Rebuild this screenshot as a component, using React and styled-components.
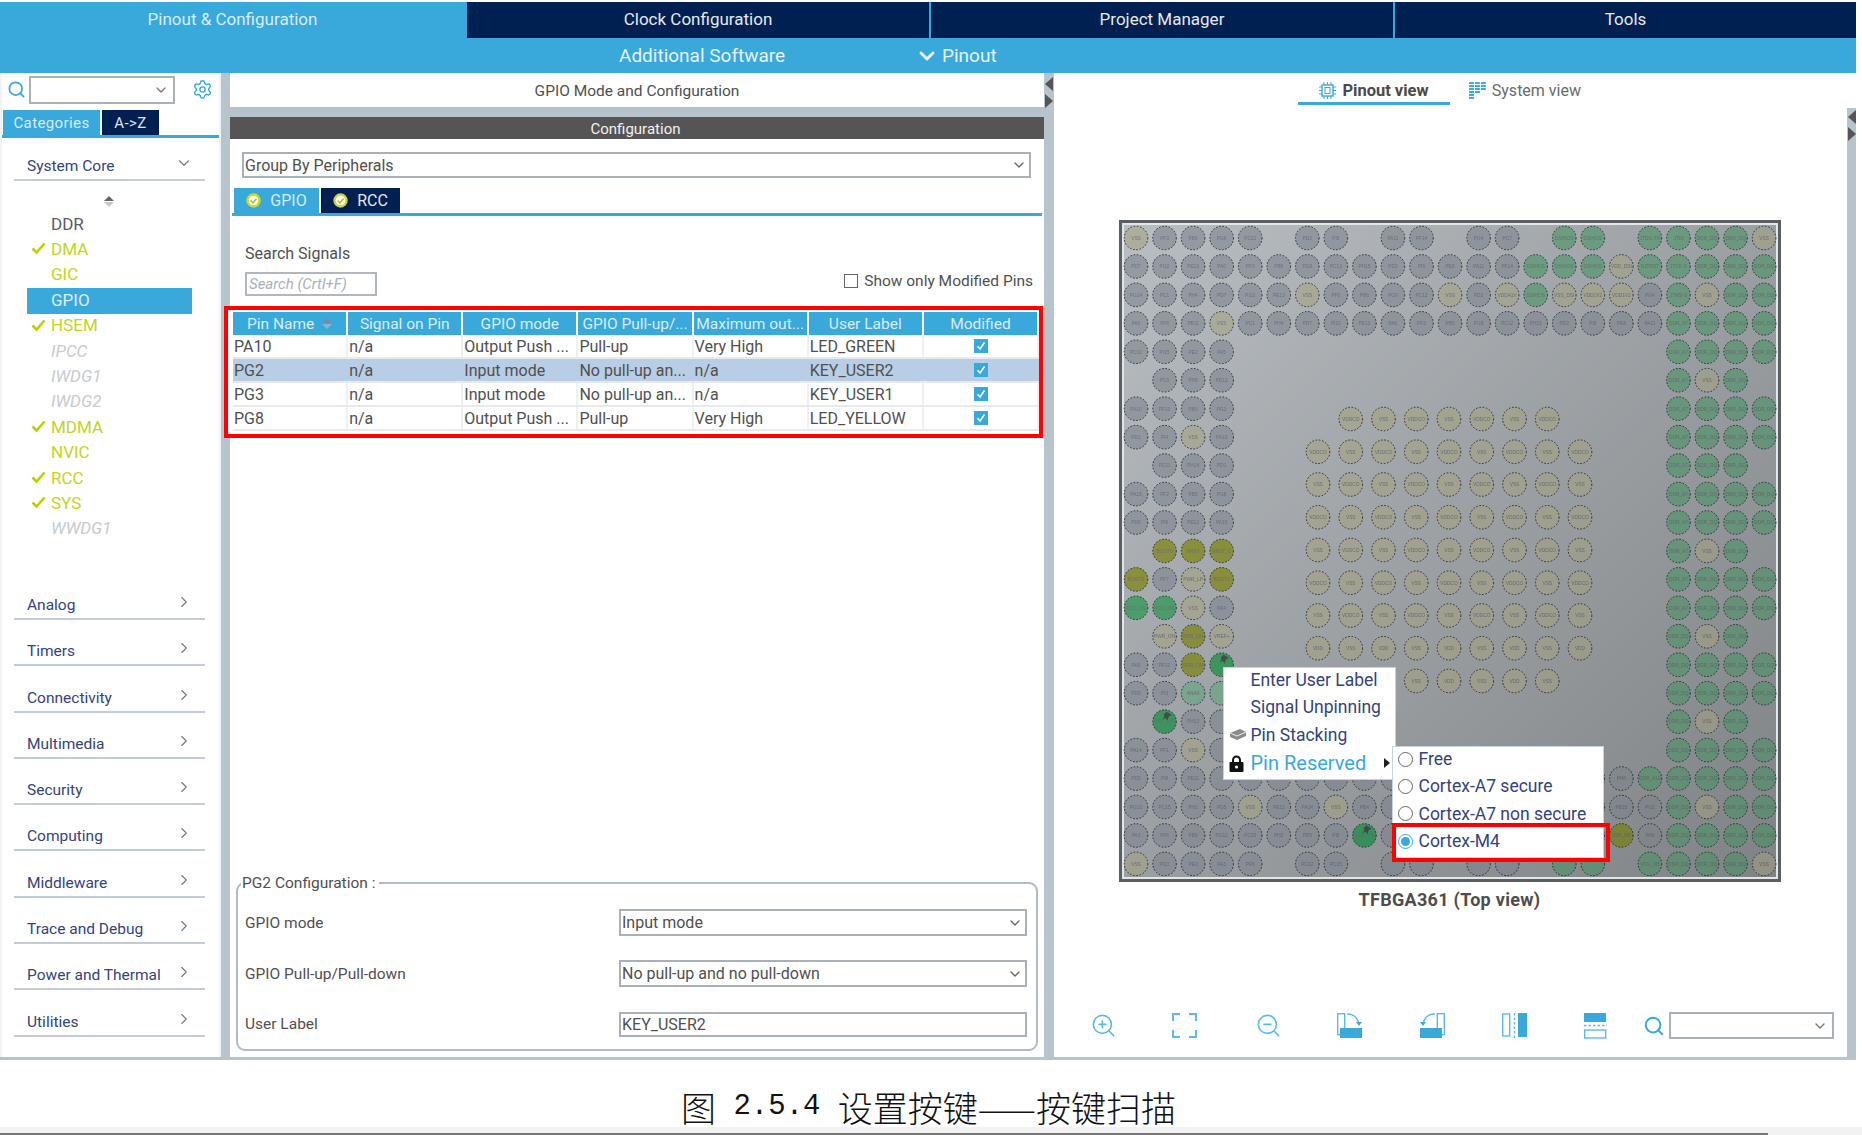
import React from 'react';
import styled, { createGlobalStyle } from 'styled-components';
import { Search, Settings, ChevronDown, ChevronRight, ZoomIn, ZoomOut } from 'lucide-react';

const BLUE = '#39a9dc';
const NAVY = '#002052';
const STRIP = '#b8c4cc';
const INK = '#34437a';
const TEXT = '#505050';

const Global = createGlobalStyle`
  html, body { margin: 0; padding: 0; background: #fff; overflow: hidden; }
  * { box-sizing: border-box; }
  body { font-family: Roboto, "Liberation Sans", Arial, sans-serif; }
`;

const Page = styled.div`
  width: 1862px; height: 1135px; display: flex; flex-direction: column; background: #fff; overflow: hidden;
`;
const Header = styled.header`
  margin-top: 2px; width: 1856px; height: 71px; background: ${BLUE}; display: flex; flex-direction: column; flex: none;
`;
const TabRow = styled.div`
  display: grid; grid-template-columns: 465px 462px 462px 1fr; column-gap: 2px; height: 36px;
`;
const TopTab = styled.div`
  display: flex; align-items: center; justify-content: center; font-size: 17px; padding-bottom: 2px;
  color: ${p => (p.$active ? '#d5ecf7' : '#e6e9ee')};
  background: ${p => (p.$active ? BLUE : NAVY)};
`;
const SubRow = styled.div`
  flex: 1; display: flex; align-items: center; color: #e4f3fa; font-size: 19px; padding: 0 0 0 619px;
`;
const SubLabel = styled.span` width: 296px; white-space: nowrap; `;
const SubPinout = styled.span` display: flex; align-items: center; gap: 3px; `;

const Main = styled.main`
  width: 1856px; height: 987px; flex: none; background: ${STRIP}; display: flex; padding-bottom: 3px;
`;

/* left */
const Left = styled.aside`
  width: 221px; flex: none; background: #fff; display: flex; flex-direction: column;
  border-left: 2px solid #f0f2f3; border-right: 2px solid #f0f2f3;
`;
const LeftTop = styled.div`
  display: flex; align-items: center; gap: 3px; height: 37px; padding: 0 0 4px 5px; color: ${BLUE}; flex: none;
`;
const Combo = styled.div`
  height: ${p => p.$h || 28}px; width: ${p => p.$w}px; border: 2px solid #aab1b7; background: #fff;
  display: flex; align-items: center; justify-content: flex-end; padding-right: 4px; color: #777; flex: none;
`;
const GearWrap = styled.span` margin-left: 14px; display: flex; `;
const CatTabs = styled.div`
  display: flex; gap: 2px; padding-left: 1px; height: 28px; border-bottom: 3px solid ${BLUE}; flex: none;
`;
const CatTab = styled.div`
  width: ${p => p.$w}px; height: 25px; font-size: 15px; letter-spacing: .4px;
  display: flex; align-items: center; justify-content: center;
  background: ${p => (p.$active ? BLUE : NAVY)}; color: ${p => (p.$active ? '#d5ecf7' : '#dfe4ec')};
`;
const Section = styled.div`
  margin: ${p => p.$mt || 0}px 14px 0 12px; height: ${p => p.$h || 46.3}px; display: flex; align-items: flex-end;
  justify-content: space-between; border-bottom: 2px solid #c3ccd4; color: ${INK}; font-size: 15.5px;
  padding: 0 12px 4px 13px; flex: none;
`;
const SectionIcon = styled.span` display: flex; color: #777; position: relative; top: -3px; `;
const Sorter = styled.div`
  height: 31px; display: flex; flex-direction: column; align-items: center; justify-content: center; padding: 10px 4px 0 0; gap: 1px; flex: none;
`;
const TriUp = styled.i` width: 0; height: 0; border: 5px solid transparent; border-top: 0; border-bottom: 5px solid ${p => p.$c}; `;
const TriDown = styled.i` width: 0; height: 0; border: 5px solid transparent; border-bottom: 0; border-top: 5px solid ${p => p.$c}; `;
const ItemList = styled.div` height: 315px; display: flex; flex-direction: column; flex: none; `;
const Item = styled.div`
  height: 25.4px; margin: 0 27px 0 25px; flex: none; position: relative; display: flex; align-items: center; padding: 0 0 2px 24px;
  font-size: 17px; font-style: ${p => (p.$off ? 'italic' : 'normal')};
  color: ${p => (p.$sel ? '#d9eef8' : p.$off ? '#c6cbd1' : p.$plain ? '#5a5a66' : '#c3d422')};
  background: ${p => (p.$sel ? BLUE : 'transparent')};
`;
const ItemCheck = styled.svg` position: absolute; left: 4px; top: 5px; `;

/* middle */
const StripCol = styled.div`
  width: ${p => p.$w}px; flex: none; display: flex; flex-direction: column; align-items: center; gap: 3px;
  padding-top: ${p => p.$pt || 0}px;
`;
const RightStrip = styled(StripCol)`
  margin-top: 35px; background: ${STRIP};
`;
const TriLeft = styled.i` width: 0; height: 0; border: 7px solid transparent; border-left: 0; border-right: 8px solid #555; `;
const TriRight = styled.i` width: 0; height: 0; border: 7px solid transparent; border-right: 0; border-left: 8px solid #555; `;
const Mid = styled.section`
  width: 814px; flex: none; background: #fff; display: flex; flex-direction: column;
`;
const MidTitle = styled.div`
  display: flex; align-items: center; justify-content: center; color: ${TEXT}; font-size: 15.5px;
  border-bottom: 10px solid ${STRIP}; flex: none; height: 44px; padding-top: 1px;
`;
const ConfBar = styled.div`
  height: 22px; background: #555; color: #f1f1f1; font-size: 15px; display: flex; align-items: center; justify-content: center; flex: none; padding: 1px 3px 0 0;
`;
const Select = styled.div`
  height: ${p => p.$h}px; margin: ${p => p.$m || 0}; width: ${p => p.$w}px; flex: none; border: 2px solid #a9b0b6; display: flex; align-items: center;
  justify-content: space-between; color: ${TEXT}; font-size: 16px; padding: 0 2px 0 1px; white-space: nowrap;
`;
const SubTabs = styled.div`
  display: flex; gap: 2px; margin: 10px 2px 0 2px; padding-left: 2px; height: 28px; border-bottom: 3px solid ${BLUE}; flex: none;
`;
const SubTab = styled.div`
  width: ${p => p.$w}px; height: 25px; display: flex; align-items: center; justify-content: center; gap: 9px; font-size: 16px;
  background: ${p => (p.$active ? BLUE : NAVY)}; color: ${p => (p.$active ? '#d5ecf7' : '#e6e9ee')};
`;
const SearchLabel = styled.div` margin: 29px 0 0 15px; color: ${TEXT}; font-size: 16px; height: 18px; line-height: 18px; flex: none; `;
const SearchRow = styled.div`
  display: flex; justify-content: space-between; align-items: flex-start; margin: 9px 11px 0 15px; height: 24px; flex: none;
`;
const SearchBox = styled.div`
  width: 132px; height: 24px; border: 2px solid #b1b7bd; color: #aab0b6; font-style: italic; font-size: 15px;
  padding-left: 2px; display: flex; align-items: center; white-space: nowrap;
`;
const ShowOnly = styled.label` display: flex; align-items: center; gap: 6px; color: ${TEXT}; font-size: 15.5px; height: 15px; margin-top: 1px; white-space: nowrap; `;
const EmptyBox = styled.span` width: 14px; height: 14px; border: 1.5px solid #666; display: block; `;
const TableFrame = styled.div`
  margin: 10px 1px 0 -6px; border: 4px solid #f00; height: 132px; padding: 2px 0 0 5px; flex: none; background: #fff;
`;
const Cols = styled.div`
  display: grid; grid-template-columns: repeat(7, 1fr); height: ${p => p.$h}px;
  background: ${p => (p.$sel ? '#b9cde4' : 'transparent')};
  border-bottom: ${p => (p.$head ? '0' : '2px solid #e6eaee')};
`;
const Th = styled.div`
  background: ${BLUE}; color: #d8eef8; font-size: 15.5px; display: flex; align-items: center; justify-content: center;
  gap: 8px; margin-right: 2px; white-space: nowrap; overflow: hidden;
`;
const Td = styled.div`
  color: ${TEXT}; font-size: 16px; display: flex; align-items: center; padding-left: 1px; white-space: nowrap; overflow: hidden;
  justify-content: ${p => (p.$center ? 'center' : 'flex-start')};
  border-right: 2px solid ${p => (p.$sel ? 'transparent' : '#eef1f3')};
`;
const SortIcon = styled.span` display: flex; flex-direction: column; gap: 1px; `;
const Fieldset = styled.fieldset`
  margin: auto 6px 6px 6px; padding: 0 9px 0 7px; height: 176px; border: 2px solid #b3bbc2; border-radius: 9px; flex: none;
  display: flex; flex-direction: column;
`;
const Legend = styled.legend`
  color: ${TEXT}; font-size: 15.5px; padding: 0 4px 0 1px; margin-left: -4px; line-height: 16px;
`;
const FormRow = styled.div`
  display: flex; align-items: center; justify-content: space-between; height: ${p => p.$h}px; margin-top: ${p => p.$mt || 0}px;
  color: ${TEXT}; font-size: 15.5px; flex: none;
`;

/* right */
const Right = styled.section`
  flex: 1; background: #fff; display: flex; min-width: 0;
`;
const RightBody = styled.div`
  flex: 1; display: flex; flex-direction: column; align-items: center; min-width: 0; padding-right: 2px;
`;
const ViewTabs = styled.div` display: flex; height: 32px; gap: 19px; flex: none; align-self: flex-start; margin-left: 244px; `;
const ViewTab = styled.div`
  display: flex; align-items: center; justify-content: center; gap: 6px; width: ${p => p.$w}px; height: 32px; padding-top: 5px; font-size: ${p => (p.$on ? 16.5 : 16)}px;
  white-space: nowrap;
  color: ${p => (p.$on ? '#4a4a4a' : '#6a6a6a')}; font-weight: ${p => (p.$on ? 700 : 400)};
  border-bottom: 3px solid ${p => (p.$on ? BLUE : 'transparent')};
`;
const ChipWrap = styled.div` margin-top: 115px; width: 662px; height: 662px; position: relative; flex: none; `;
const ChipTitle = styled.div` margin-top: 9px; font-weight: 700; font-size: 18px; letter-spacing: .3px; color: #4d4d4d; height: 18px; line-height: 18px; flex: none; `;
const Toolbar = styled.div`
  margin-top: 103px; display: flex; align-items: center; align-self: flex-start; margin-left: 36px; color: ${BLUE}; height: 27px; flex: none;
`;
const ToolSlot = styled.span` width: ${p => p.$w || 82.4}px; flex: none; display: flex; `;
const ToolTail = styled.span` display: flex; align-items: center; gap: 4px; margin-left: -1px; `;

const Menu = styled.div`
  position: absolute; background: #fff; border: 1.5px solid #c7d3db; color: ${INK};
  left: ${p => p.$l}px; top: ${p => p.$t}px; width: ${p => p.$w}px; height: ${p => p.$h}px;
`;
const MenuLine = styled.div`
  height: 27.3px; display: flex; align-items: center; padding: 0 0 ${p => (p.$active ? 1 : 3)}px ${p => p.$pl}px; position: relative; white-space: nowrap;
  color: ${p => (p.$active ? BLUE : INK)}; font-size: ${p => (p.$active ? 20 : 17.5)}px;
  gap: 6px;
`;
const MenuIcon = styled.span` position: absolute; left: 5px; display: flex; `;
const MenuArrow = styled.i`
  position: absolute; right: 5px; top: 8px; width: 0; height: 0;
  border: 5px solid transparent; border-right: 0; border-left: 6px solid #222;
`;
const Radio = styled.span`
  width: 15px; height: 15px; border-radius: 50%; flex: none; position: relative;
  border: 1.5px solid ${p => (p.$on ? BLUE : '#666')};
  &::after { content: ''; position: absolute; inset: 2px; border-radius: 50%; background: ${p => (p.$on ? BLUE : 'transparent')}; }
`;
const RedBox = styled.div`
  position: absolute; left: 273px; top: 603px; width: 218px; height: 39px; border: 4px solid #f00; pointer-events: none;
`;
const Caption = styled.div`
  flex: none; height: 67px; display: flex; align-items: center; justify-content: center; padding: 26px 5px 0 0;
  font-family: "Noto Sans CJK SC", sans-serif; font-size: 35px; line-height: 38px; font-weight: 300; color: #111; white-space: pre;
`;
const CaptionNum = styled.span` font-family: "Liberation Mono", monospace; font-size: 29px; `;
const Footer = styled.div`
  flex: none; height: 8px; background: #f2f2f2; display: flex; align-items: flex-end;
  &::after { content: ''; display: block; width: 1768px; height: 2px; background: #777; }
`;

/* chip */
const X = c => 17 + 28.55 * c;
const Y = r => 18 + 28.45 * r;
const FILL = {
  gray: '#959ba3', tan: '#aeae9c', green: '#72a588', mid: '#4fa570', dark: '#3f9f63', gold: '#90963f', lite: '#82b098',
};
const OVERRIDE = {
  '0,0': ['tan', 'VSS'], '2,6': ['tan', 'VSS'], '3,3': ['tan', 'VSS'], '2,11': ['tan', 'VSS'], '2,13': ['tan', 'VDDA1V'],
  '1,17': ['tan', 'VDD_DSI'], '2,15': ['tan', 'VSS_DSI'], '2,16': ['tan', 'VDD1V2'], '2,17': ['tan', 'VDD1V2'], '2,20': ['tan', 'VSS'],
  '0,22': ['tan', 'VSS'], '5,20': ['tan', 'VSS'], '7,2': ['tan', 'VSS'], '13,2': ['tan', 'VSS'], '12,2': ['tan', 'PWR_LP'],
  '14,1': ['tan', 'PWR_ON'], '14,3': ['tan', 'VREF+'], '18,2': ['tan', 'VSS'], '20,4': ['tan', 'VSS'], '20,7': ['tan', 'VSS'],
  '22,0': ['tan', 'VSS'], '22,22': ['tan', 'VSS'], '20,20': ['tan', 'VSS'], '17,20': ['tan', 'VSS'], '11,20': ['tan', 'VSS'],
  '14,20': ['tan', 'VSS'],
  '0,15': ['green', 'DSIHOS'], '0,16': ['green', 'DSIHOS'], '0,18': ['green', 'JTDO-TR'], '0,19': ['green', 'JTDI'], '0,20': ['green', 'DDR_DQ'], '0,21': ['green', 'DDR_DQ'],
  '1,14': ['green', 'DSIHOS'], '1,15': ['green', 'DSIHOS'], '1,16': ['green', 'DSIHOS'], '1,18': ['green', 'NJTRST'], '1,19': ['green', 'JTCK-S'],
  '2,14': ['green', 'DSIHOS'], '2,19': ['green', 'JTMS-S'], '19,18': ['green', 'DDR_A10'], '22,18': ['green', 'VTG_VB'],
  '22,15': ['green', 'USB_DP'], '22,16': ['green', 'USB_DP'], '16,2': ['lite', 'ANA0'], '16,3': ['lite', 'ANA1'],
  '13,0': ['mid', 'RCC_OS'], '13,1': ['mid', 'RCC_OS'], '15,3': ['dark', 'KEY_US'], '17,1': ['dark', 'KEY_US'], '21,8': ['dark', 'LED_YE'],
  '11,1': ['gold', 'BOOT0'], '11,2': ['gold', 'NRST'], '11,3': ['gold', 'NRST_C'], '12,0': ['gold', 'BOOT0'], '12,3': ['gold', 'BOOT1'],
  '14,2': ['gold', 'PDR_ON'], '15,2': ['gold', 'PDR_ON'], '21,17': ['gold', 'USB_RR'],
};
const LETTERS = 'ABCDEFGHI';
const ringPins = [];
for (let r = 0; r < 23; r++) {
  for (let c = 0; c < 23; c++) {
    if (!(r <= 3 || r >= 19 || c <= 3 || c >= 19)) continue;
    const gaps = [5, 8, 11, 14, 17];
    if ((r === 0 || r === 22) && gaps.includes(c)) continue;
    if ((c === 0 || c === 22) && gaps.includes(r)) continue;
    const o = OVERRIDE[`${r},${c}`];
    const type = o ? o[0] : c >= 19 ? 'green' : 'gray';
    const label = o ? o[1] : c >= 19 ? (r < 14 && c === 19 ? 'DDR_A7' : 'DDR_DQ') : `P${LETTERS[(r * 3 + c * 5) % 9]}${(r * 7 + c * 3) % 16}`;
    ringPins.push({ key: `r${r}c${c}`, x: X(c), y: Y(r), type, label, pinned: type === 'dark' });
  }
}
const corePins = [];
for (let r = 0; r < 9; r++) {
  for (let c = 0; c < 9; c++) {
    if ((r === 0 || r === 8) && (c === 0 || c === 8)) continue;
    let label = (r + c) % 2 === 0 ? 'VSS' : 'VDDCO';
    if (r >= 7) label = (c % 2 === 0) ? 'VDD' : 'VSS';
    corePins.push({ key: `k${r}-${c}`, x: 199 + 32.75 * c, y: 199 + 32.75 * r, type: 'tan', label });
  }
}
const underMenu = p =>
  (p.x > 92 && p.x < 290 && p.y > 436 && p.y < 571) || (p.x > 261 && p.x < 497 && p.y > 515 && p.y < 652);
const pins = [...ringPins, ...corePins];

const Chip = () => (
  <svg width="662" height="662" viewBox="0 0 662 662" role="img">
    <defs>
      <linearGradient id="chipBg" x1="0" y1="0" x2="1" y2="1">
        <stop offset="0" stopColor="#b9bec3" />
        <stop offset="1" stopColor="#989c9f" />
      </linearGradient>
      <linearGradient id="chipShade" x1="0" y1="0" x2="1" y2="1">
        <stop offset="0" stopColor="#000" stopOpacity="0" />
        <stop offset="1" stopColor="#000" stopOpacity=".16" />
      </linearGradient>
    </defs>
    <rect x="0" y="0" width="662" height="662" fill="#5c5f61" />
    <rect x="3" y="3" width="656" height="656" fill="#e2e5e7" />
    <rect x="5" y="5" width="652" height="652" fill="url(#chipBg)" />
    <g style={{ filter: 'blur(.5px)' }}>
      {pins.map(p => (
        <g key={p.key}>
          <circle cx={p.x} cy={p.y} r="11.8" fill={FILL[p.type]} stroke="#2d3033" strokeWidth="1" strokeDasharray="1.6 1.7" />
          {!underMenu(p) && (
            <text x={p.x} y={p.y + 1.8} textAnchor="middle" fontSize="4.8" fontFamily="Liberation Sans, sans-serif" fill="#6f7477">{p.label}</text>
          )}
          {p.pinned && <path d={`M${p.x + 2} ${p.y - 10}l5 3-3 2 -1 4-2-3-3 2 2-4-1-1z`} fill="#4a5052" />}
        </g>
      ))}
    </g>
    <rect x="5" y="5" width="652" height="652" fill="url(#chipShade)" />
  </svg>
);

const Tick = ({ c = '#bcd000' }) => (
  <ItemCheck width="15" height="13" viewBox="0 0 15 13"><path d="M1.5 6.5 5.500 10.500 13.500 1.500" fill="none" stroke={c} strokeWidth="2.6" /></ItemCheck>
);
const BadgeTick = () => (
  <svg width="15" height="15" viewBox="0 0 15 15"><circle cx="7.500" cy="7.500" r="6" fill="#fff" stroke="#cfd82a" strokeWidth="2.4" /><path d="M4.600 7.500 6.800 9.800 10.600 5.600" fill="none" stroke="#b9c81e" strokeWidth="1.6" /></svg>
);
const BlueCheck = () => (
  <svg width="14" height="14" viewBox="0 0 14 14"><rect width="14" height="14" fill={BLUE} /><path d="M3.500 7.200 6 10 10.500 3.500" fill="none" stroke="#fff" strokeWidth="1.5" /></svg>
);
const ChipIcon = () => (
  <svg width="17" height="17" viewBox="0 0 17 17" fill="none" stroke={BLUE}>
    <rect x="3" y="3" width="11" height="11" strokeWidth="1.4" />
    <rect x="6" y="5.500" width="5" height="6" strokeWidth="1" />
    <path d="M5 0v3M8.500 0v3M12 0v3M5 14v3M8.500 14v3M12 14v3M0 5h3M0 8.500h3M0 12h3M14 5h3M14 8.500h3M14 12h3" strokeWidth="1" />
  </svg>
);
const SysIcon = () => (
  <svg width="17" height="17" viewBox="0 0 17 17" fill={BLUE}>
    {[0, 3, 6, 9, 12, 15].map(y => <rect key={y} x="0" y={y} width="5" height="2" />)}
    {[0, 3, 6, 9].map(y => <rect key={y} x="6" y={y} width="5" height="2" />)}
    {[0, 3, 6].map(y => <rect key={y} x="12" y={y} width="5" height="2" />)}
  </svg>
);
const FitIcon = () => (
  <svg width="25" height="25" viewBox="0 0 25 25" fill="none" stroke="#5fb9e6" strokeWidth="2"><path d="M1 8V1h7M17 1h7v7M24 17v7h-7M8 24H1v-7" /></svg>
);
const RotR = () => (
  <svg width="25" height="25" viewBox="0 0 25 25" fill="none" stroke="#5fb9e6" strokeWidth="1.4">
    <rect x=".7" y=".7" width="7" height="21" /><rect x="3" y="15" width="22" height="10" fill={BLUE} stroke="none" />
    <path d="M10 1c6 0 11 3 12 11" /><path d="M19 9l3 4 3-4z" fill={BLUE} stroke="none" />
  </svg>
);
const RotL = () => (
  <svg width="25" height="25" viewBox="0 0 25 25" fill="none" stroke="#5fb9e6" strokeWidth="1.4">
    <rect x="17.300" y=".7" width="7" height="21" /><rect x="0" y="15" width="22" height="10" fill={BLUE} stroke="none" />
    <path d="M15 1C9 1 4 4 3 12" /><path d="M0 9l3 4 3-4z" fill={BLUE} stroke="none" />
  </svg>
);
const FlipV = () => (
  <svg width="25" height="25" viewBox="0 0 25 25" fill="none" stroke="#5fb9e6">
    <rect x=".7" y="1" width="7" height="22" strokeWidth="1.4" /><path d="M12.500 0v25" strokeWidth="1.400" strokeDasharray="2.500 2" />
    <rect x="16" y="0" width="9" height="24" fill={BLUE} stroke="none" />
  </svg>
);
const FlipH = () => (
  <svg width="23" height="26" viewBox="0 0 23 26" fill="none" stroke="#5fb9e6">
    <rect x="0" y="0" width="22" height="9" fill={BLUE} stroke="none" /><path d="M0 12.500h23" strokeWidth="1.400" strokeDasharray="2.500 2" />
    <rect x=".7" y="17" width="21" height="8" strokeWidth="1.400" />
  </svg>
);
const StackIcon = () => (
  <svg width="18" height="13" viewBox="0 0 18 13"><path d="M1 5 11 1l6 3v4L8 12 1 9z" fill="#8a8a8a" /><path d="M1 5l7 3 9-4" fill="none" stroke="#eee" strokeWidth="1" /></svg>
);
const LockIcon = () => (
  <svg width="15" height="17" viewBox="0 0 15 17"><path d="M4 8V5a3.500 3.500 0 0 1 7 0v3" fill="none" stroke="#111" strokeWidth="2" /><rect x="0.500" y="7" width="14" height="10" rx="1" fill="#111" /><circle cx="7.500" cy="12" r="1.600" fill="#fff" /></svg>
);

const systemItems = [
  ['DDR', 'plain'], ['DMA', 'tick'], ['GIC', ''], ['GPIO', 'sel'], ['HSEM', 'tick'], ['IPCC', 'off'], ['IWDG1', 'off'],
  ['IWDG2', 'off'], ['MDMA', 'tick'], ['NVIC', ''], ['RCC', 'tick'], ['SYS', 'tick'], ['WWDG1', 'off'],
];
const sections = ['Analog', 'Timers', 'Connectivity', 'Multimedia', 'Security', 'Computing', 'Middleware', 'Trace and Debug', 'Power and Thermal', 'Utilities'];
const heads = ['Pin Name', 'Signal on Pin', 'GPIO mode', 'GPIO Pull-up/...', 'Maximum out...', 'User Label', 'Modified'];
const rows = [
  ['PA10', 'n/a', 'Output Push ...', 'Pull-up', 'Very High', 'LED_GREEN'],
  ['PG2', 'n/a', 'Input mode', 'No pull-up an...', 'n/a', 'KEY_USER2'],
  ['PG3', 'n/a', 'Input mode', 'No pull-up an...', 'n/a', 'KEY_USER1'],
  ['PG8', 'n/a', 'Output Push ...', 'Pull-up', 'Very High', 'LED_YELLOW'],
];

export default function App() {
  return (
    <Page>
      <Global />
      <Header>
        <TabRow>
          <TopTab $active>Pinout &amp; Configuration</TopTab>
          <TopTab>Clock Configuration</TopTab>
          <TopTab>Project Manager</TopTab>
          <TopTab>Tools</TopTab>
        </TabRow>
        <SubRow>
          <SubLabel>Additional Software</SubLabel>
          <SubPinout><ChevronDown size={24} strokeWidth={3} />Pinout</SubPinout>
        </SubRow>
      </Header>
      <Main>
        <Left>
          <LeftTop>
            <Search size={19} strokeWidth={2.2} />
            <Combo $w={146}><ChevronDown size={16} /></Combo>
            <GearWrap><Settings size={21} strokeWidth={1.6} /></GearWrap>
          </LeftTop>
          <CatTabs>
            <CatTab $w={97} $active>Categories</CatTab>
            <CatTab $w={57}>A-&gt;Z</CatTab>
          </CatTabs>
          <Section $h={43}>System Core<SectionIcon><ChevronDown size={18} strokeWidth={1.5} /></SectionIcon></Section>
          <Sorter><TriUp $c="#666" /><TriDown $c="#c4c8cc" /></Sorter>
          <ItemList>
            {systemItems.map(([name, kind]) => (
              <Item key={name} $sel={kind === 'sel'} $off={kind === 'off'} $plain={kind === 'plain'}>
                {kind === 'tick' && <Tick />}{name}
              </Item>
            ))}
          </ItemList>
          {sections.map((s, i) => (
            <Section key={s} $mt={i === 0 ? 47 : 0} $h={i === 0 ? 46 : 46.3}>{s}<SectionIcon><ChevronRight size={18} strokeWidth={1.5} /></SectionIcon></Section>
          ))}
        </Left>
        <StripCol $w={9} />
        <Mid>
          <MidTitle>GPIO Mode and Configuration</MidTitle>
          <ConfBar>Configuration</ConfBar>
          <Select $w={789} $h={26} $m="13px 0 0 12px">Group By Peripherals<ChevronDown size={16} color="#666" /></Select>
          <SubTabs>
            <SubTab $w={85} $active><BadgeTick />GPIO</SubTab>
            <SubTab $w={79}><BadgeTick />RCC</SubTab>
          </SubTabs>
          <SearchLabel>Search Signals</SearchLabel>
          <SearchRow>
            <SearchBox>Search (Crtl+F)</SearchBox>
            <ShowOnly><EmptyBox />Show only Modified Pins</ShowOnly>
          </SearchRow>
          <TableFrame>
            <Cols $head $h={23}>
              {heads.map((h, i) => (
                <Th key={h}>{h}{i === 0 && <SortIcon><TriUp $c="#6f8fa5" /><TriDown $c="#7fb8d8" /></SortIcon>}</Th>
              ))}
            </Cols>
            {rows.map((r, i) => (
              <Cols key={r[0]} $h={24} $sel={i === 1}>
                {r.map(v => <Td key={v + r[0]} $sel={i === 1}>{v}</Td>)}
                <Td $center $sel={i === 1}><BlueCheck /></Td>
              </Cols>
            ))}
          </TableFrame>
          <Fieldset>
            <Legend>PG2 Configuration :</Legend>
            <FormRow $h={51} $mt={6}>GPIO mode<Select $w={408} $h={27}>Input mode<ChevronDown size={16} color="#666" /></Select></FormRow>
            <FormRow $h={51}>GPIO Pull-up/Pull-down<Select $w={408} $h={27}>No pull-up and no pull-down<ChevronDown size={16} color="#666" /></Select></FormRow>
            <FormRow $h={50}>User Label<Select $w={408} $h={25}>KEY_USER2</Select></FormRow>
          </Fieldset>
        </Mid>
        <StripCol $w={10} $pt={4}><TriLeft /><TriRight /></StripCol>
        <Right>
          <RightBody>
            <ViewTabs>
              <ViewTab $w={152} $on><ChipIcon />Pinout view</ViewTab>
              <ViewTab $w={112}><SysIcon />System view</ViewTab>
            </ViewTabs>
            <ChipWrap>
              <Chip />
              <Menu $l={104} $t={447} $w={173} $h={113}>
                <MenuLine $pl={27}>Enter User Label</MenuLine>
                <MenuLine $pl={27}>Signal Unpinning</MenuLine>
                <MenuLine $pl={27}><MenuIcon><StackIcon /></MenuIcon>Pin Stacking</MenuLine>
                <MenuLine $pl={27} $active><MenuIcon><LockIcon /></MenuIcon>Pin Reserved<MenuArrow /></MenuLine>
              </Menu>
              <Menu $l={273} $t={526} $w={212} $h={112}>
                <MenuLine $pl={5}><Radio />Free</MenuLine>
                <MenuLine $pl={5}><Radio />Cortex-A7 secure</MenuLine>
                <MenuLine $pl={5}><Radio />Cortex-A7 non secure</MenuLine>
                <MenuLine $pl={5}><Radio $on />Cortex-M4</MenuLine>
              </Menu>
              <RedBox />
            </ChipWrap>
            <ChipTitle>TFBGA361 (Top view)</ChipTitle>
            <Toolbar>
              <ToolSlot><ZoomIn size={27} strokeWidth={1.5} color="#5fb9e6" /></ToolSlot>
              <ToolSlot><FitIcon /></ToolSlot>
              <ToolSlot><ZoomOut size={27} strokeWidth={1.5} color="#5fb9e6" /></ToolSlot>
              <ToolSlot><RotR /></ToolSlot>
              <ToolSlot><RotL /></ToolSlot>
              <ToolSlot><FlipV /></ToolSlot>
              <ToolSlot $w={60}><FlipH /></ToolSlot>
              <ToolTail>
                <Search size={22} strokeWidth={2.2} />
                <Combo $w={165} $h={27}><ChevronDown size={16} /></Combo>
              </ToolTail>
            </Toolbar>
          </RightBody>
          <RightStrip $w={9} $pt={2}><TriLeft /><TriRight /></RightStrip>
        </Right>
      </Main>
      <Caption>图<CaptionNum> 2.5.4 </CaptionNum>设置按键——按键扫描</Caption>
      <Footer />
    </Page>
  );
}
